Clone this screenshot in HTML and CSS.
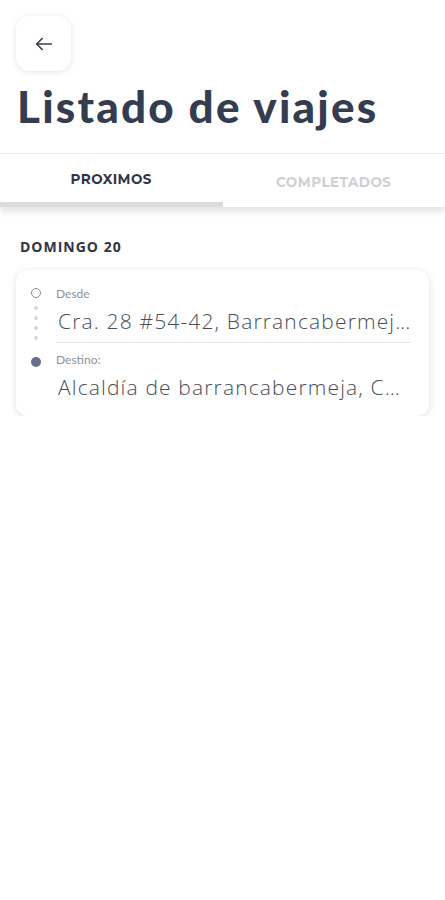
FILE: index.html
```html
<!DOCTYPE html>
<html lang="es">
<head>
    <meta charset="UTF-8">
    <meta name="viewport" content="width=device-width, initial-scale=1.0">
    <title>Listado de viajes</title>
    <link rel="stylesheet" href="styles.css">
</head>
<body>
    <header class="top">
        <button class="back-btn" aria-label="Volver">
            <svg width="22" height="22" viewBox="0 0 24 24" fill="none" stroke="#3a3f4b" stroke-width="1.8" stroke-linecap="round" stroke-linejoin="round">
                <path d="M20 12H4"/>
                <path d="M10 6l-6 6 6 6"/>
            </svg>
        </button>
        <h1 class="title">Listado de viajes</h1>
    </header>

    <nav class="tabs">
        <div class="tab active">PROXIMOS</div>
        <div class="tab">COMPLETADOS</div>
    </nav>

    <main class="content">
        <h2 class="day">DOMINGO 20</h2>

        <div class="trip-card">
            <div class="stop">
                <div class="marker">
                    <span class="dot-outline"></span>
                    <span class="dots">
                        <i></i><i></i><i></i><i></i>
                    </span>
                </div>
                <div class="stop-info with-line">
                    <div class="stop-label">Desde</div>
                    <div class="stop-address">Cra. 28 #54-42, Barrancabermeja, Santander</div>
                </div>
            </div>
            <div class="stop">
                <div class="marker">
                    <span class="dot-fill"></span>
                </div>
                <div class="stop-info">
                    <div class="stop-label">Destino:</div>
                    <div class="stop-address">Alcaldía de barrancabermeja, Calle 50</div>
                </div>
            </div>
        </div>
    </main>
</body>
</html>
```

FILE: styles.css
```css
body {
    margin: 0;
    background: #ffffff;
    font-family: "Lato", "Noto Sans", sans-serif;
    color: #343d4f;
}

.top {
    padding: 16px 16px 0 16px;
}

.back-btn {
    width: 55px;
    height: 55px;
    border: none;
    border-radius: 14px;
    background: #ffffff;
    box-shadow: 0 1px 6px rgba(0, 0, 0, 0.10);
    display: flex;
    align-items: center;
    justify-content: center;
    padding: 0;
    cursor: pointer;
}

.title {
    margin: 7px 0 0 1px;
    font-size: 44px;
    font-weight: 900;
    letter-spacing: 2.2px;
    line-height: 56px;
    color: #343d4f;
}

/* tabs */
.tabs {
    margin-top: 19px;
    display: flex;
    border-top: 1px solid #f0f0f0;
    box-shadow: 0 5px 6px rgba(0, 0, 0, 0.10);
}

.tab {
    flex: 1;
    height: 53px;
    box-sizing: border-box;
    padding-top: 2px;
    display: flex;
    align-items: center;
    justify-content: center;
    font-family: "Montserrat", "Open Sans", sans-serif;
    font-weight: 700;
    font-size: 13.5px;
    letter-spacing: 0.5px;
    color: #cfd0d4;
}

.tab.active {
    color: #2f3445;
    border-bottom: 5px solid #dcdcdc;
}

.content {
    padding: 0 16px;
}

.day {
    margin: 30px 0 0 4px;
    font-family: "Open Sans", sans-serif;
    font-size: 14px;
    font-weight: 700;
    letter-spacing: 1px;
    color: #2f3445;
}

/* trip card */
.trip-card {
    margin-top: 14px;
    background: #ffffff;
    border-radius: 12px;
    box-shadow: 0 2px 8px rgba(0, 0, 0, 0.12);
    padding: 16px 18px 15px 14px;
}

.stop {
    display: flex;
}

.marker {
    width: 12px;
    display: flex;
    flex-direction: column;
    align-items: center;
    padding-top: 2px;
    margin-right: 14px;
}

.dot-outline {
    width: 8px;
    height: 8px;
    border: 1.5px solid #8a8d96;
    border-radius: 50%;
}

.dots {
    display: flex;
    flex-direction: column;
    gap: 6px;
    margin-top: 8px;
}

.dots i {
    width: 4px;
    height: 4px;
    border-radius: 50%;
    background: #d6d7db;
}

.dot-fill {
    width: 10px;
    height: 10px;
    border-radius: 50%;
    background: #66708c;
    margin-top: 3px;
}

.stop-info {
    flex: 1;
    min-width: 0;
}

.stop-info.with-line {
    border-bottom: 1px solid #e6e6e6;
    padding-bottom: 7px;
    margin-bottom: 9px;
}

.stop-label {
    font-family: "Lato", sans-serif;
    font-size: 12px;
    color: #8e9098;
    line-height: 16px;
}

.stop-address {
    margin: 6px 0 0 2px;
    font-family: "Open Sans", sans-serif;
    font-weight: 300;
    font-size: 21px;
    letter-spacing: 1.15px;
    line-height: 27px;
    color: #4a4d55;
    white-space: nowrap;
    overflow: hidden;
    text-overflow: ellipsis;
}
```
